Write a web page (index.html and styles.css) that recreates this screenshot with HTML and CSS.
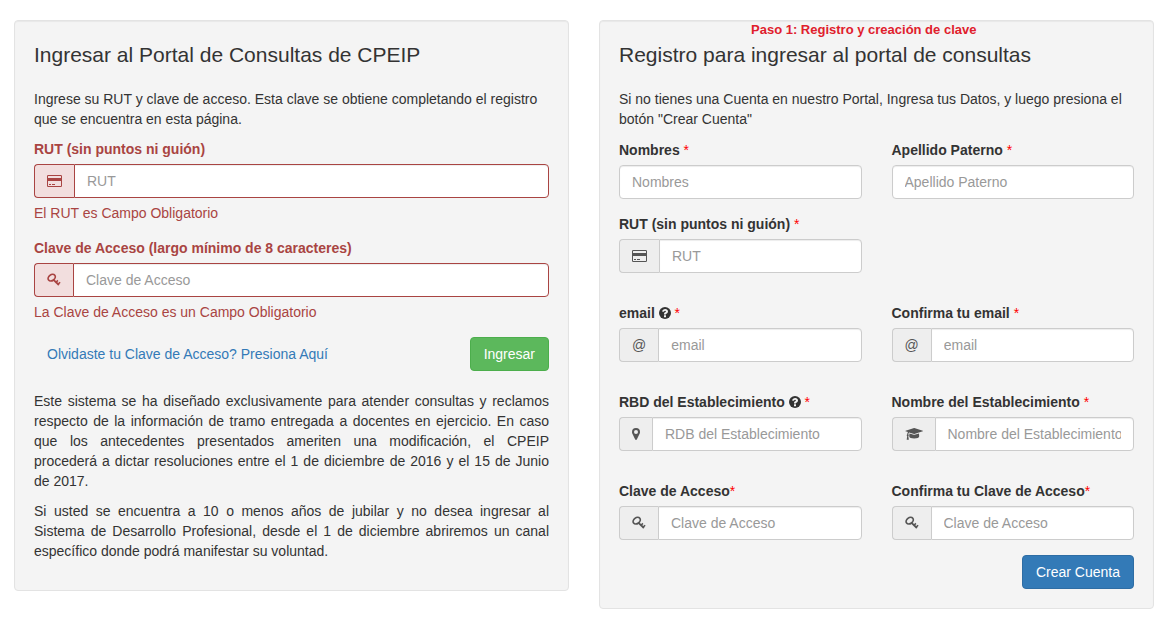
FILE: index.html
```html
<!DOCTYPE html>
<html lang="es">
<head>
<meta charset="utf-8">
<title>Portal de Consultas de CPEIP</title>
<link rel="stylesheet" href="styles.css">
</head>
<body>
<svg class="sprite" aria-hidden="true">
  <symbol id="card" viewBox="0 0 15 14"><path fill-rule="evenodd" d="M1.3 1h12.4A1.3 1.3 0 0 1 15 2.300v9.400a1.300 1.300 0 0 1-1.300 1.300H1.300A1.300 1.300 0 0 1 0 11.700V2.300A1.300 1.300 0 0 1 1.300 1zM1.300 2a.3.3 0 0 0-.3.3V4h13V2.300a.3.3 0 0 0-.3-.3zM1 7v4.700c0 .2.100.3.300.3h12.400c.2 0 .3-.1.300-.3V7zM2 10h2v1H2zM5 10h3v1H5z"/></symbol>
  <symbol id="key" viewBox="0 0 14 14"><g fill="none" stroke="currentColor"><ellipse cx="4.700" cy="4.700" rx="3.900" ry="2.900" transform="rotate(-38 4.700 4.700)" stroke-width="1.700"/><path stroke-width="1.800" d="M6.300 6.600l5.600 5.400"/><path stroke-width="1.600" d="M9 9.300l1.900-1.900M11 11.300l2.100-2.100"/></g></symbol>
  <symbol id="pin" viewBox="0 0 8 14"><path fill-rule="evenodd" d="M4 1a4 4 0 0 1 4 4c0 .7-.1 1.200-.4 1.700l-2.800 5.800a.9.9 0 0 1-1.600 0L.4 6.700C.1 6.200 0 5.700 0 5a4 4 0 0 1 4-4zm0 2a2 2 0 1 0 0 4 2 2 0 0 0 0-4z"/></symbol>
  <symbol id="cap" viewBox="0 0 18 14"><path d="M14 6.400l.2 2.800C14.300 10.500 12 11.500 9.200 11.500S4.100 10.500 4.200 9.200l.2-2.800 4.500 1.400h.6zM18 4c0 .1-.1.200-.2.300L9.300 7h-.2L4.100 5.400c-.4.300-.7 1-.8 2 .3.200.5.500.5.900 0 .3-.2.600-.5.800l.5 3.400c0 .2-.1.300-.3.300H2c-.2 0-.3-.1-.3-.3l.5-3.400c-.3-.2-.5-.5-.5-.8 0-.4.200-.7.5-.9.100-.8.300-1.700.8-2.300L.600 4.300C.500 4.200.4 4.100.4 4s.1-.2.200-.3L9.100 1h.2l8.500 2.700c.1.100.2.200.2.300z"/></symbol>
  <symbol id="help" viewBox="0 0 12 14"><circle cx="6" cy="7" r="6"/><path class="mark" d="M5 9.300h2v2H5zM3 5.400C3.500 3.900 4.500 3 6.200 3 7.900 3 9 4 9 5.400c0 1.200-.7 1.700-1.300 2-.5.300-.7.500-.7.900v.2H5v-.4c0-1 .5-1.500 1.100-1.900.5-.3.800-.4.800-.8s-.3-.7-.8-.7-.9.300-1.300 1z"/></symbol>
</svg>
<main class="page">
  <section class="well">
    <h1 class="title">Ingresar al Portal de Consultas de CPEIP</h1>
    <p>Ingrese su RUT y clave de acceso. Esta clave se obtiene completando el registro que se encuentra en esta página.</p>
    <form>
      <div class="field error">
        <label for="l-rut">RUT (sin puntos ni guión)</label>
        <div class="group"><span class="addon"><svg class="icon card"><use href="#card"/></svg></span><input id="l-rut" type="text" placeholder="RUT"></div>
        <span class="note">El RUT es Campo Obligatorio</span>
      </div>
      <div class="field error">
        <label for="l-clave">Clave de Acceso (largo mínimo de 8 caracteres)</label>
        <div class="group"><span class="addon"><svg class="icon"><use href="#key"/></svg></span><input id="l-clave" type="password" placeholder="Clave de Acceso"></div>
        <span class="note">La Clave de Acceso es un Campo Obligatorio</span>
      </div>
      <div class="actions">
        <a class="link" href="#">Olvidaste tu Clave de Acceso? Presiona Aquí</a>
        <button class="btn success" type="button">Ingresar</button>
      </div>
    </form>
    <p class="justify">Este sistema se ha diseñado exclusivamente para atender consultas y reclamos respecto de la información de tramo entregada a docentes en ejercicio. En caso que los antecedentes presentados ameriten una modificación, el CPEIP procederá&nbsp;a&nbsp;dictar resoluciones entre el 1 de diciembre de 2016 y el 15 de Junio de&nbsp;2017.</p>
    <p class="justify">Si usted se encuentra a 10 o menos años de jubilar y no desea ingresar al Sistema de Desarrollo Profesional, desde el 1 de diciembre abriremos un canal específico donde podrá manifestar su voluntad.</p>
  </section>

  <section class="well">
    <div class="step">Paso 1: Registro y creación de clave</div>
    <h2 class="title">Registro para ingresar al portal de consultas</h2>
    <p>Si no tienes una Cuenta en nuestro Portal, Ingresa tus Datos, y luego presiona el botón "Crear Cuenta"</p>
    <form class="register">
      <div class="row tight">
        <div class="field"><label for="nombres">Nombres <span class="req">*</span></label><div class="group"><input id="nombres" type="text" placeholder="Nombres"></div></div>
        <div class="field"><label for="apellido">Apellido Paterno <span class="req">*</span></label><div class="group"><input id="apellido" type="text" placeholder="Apellido Paterno"></div></div>
      </div>
      <div class="row">
        <div class="field"><label for="rut">RUT (sin puntos ni guión) <span class="req">*</span></label><div class="group"><span class="addon"><svg class="icon card"><use href="#card"/></svg></span><input id="rut" type="text" placeholder="RUT"></div></div>
      </div>
      <div class="row">
        <div class="field"><label for="email">email <svg class="icon help"><use href="#help"/></svg> <span class="req">*</span></label><div class="group"><span class="addon">@</span><input id="email" type="email" placeholder="email"></div></div>
        <div class="field"><label for="email2">Confirma tu email <span class="req">*</span></label><div class="group"><span class="addon">@</span><input id="email2" type="email" placeholder="email"></div></div>
      </div>
      <div class="row">
        <div class="field"><label for="rbd">RBD del Establecimiento <svg class="icon help"><use href="#help"/></svg> <span class="req">*</span></label><div class="group"><span class="addon"><svg class="icon pin"><use href="#pin"/></svg></span><input id="rbd" type="text" placeholder="RDB del Establecimiento"></div></div>
        <div class="field"><label for="estab">Nombre del Establecimiento <span class="req">*</span></label><div class="group"><span class="addon"><svg class="icon cap"><use href="#cap"/></svg></span><input id="estab" type="text" placeholder="Nombre del Establecimiento"></div></div>
      </div>
      <div class="row tight">
        <div class="field"><label for="clave">Clave de Acceso<span class="req">*</span></label><div class="group"><span class="addon"><svg class="icon"><use href="#key"/></svg></span><input id="clave" type="password" placeholder="Clave de Acceso"></div></div>
        <div class="field"><label for="clave2">Confirma tu Clave de Acceso<span class="req">*</span></label><div class="group"><span class="addon"><svg class="icon"><use href="#key"/></svg></span><input id="clave2" type="password" placeholder="Clave de Acceso"></div></div>
      </div>
      <div class="actions end"><button class="btn primary" type="button">Crear Cuenta</button></div>
    </form>
  </section>
</main>
</body>
</html>
```
FILE: styles.css
```css
* { box-sizing: border-box; }
body {
  margin: 0;
  background: #fff;
  color: #333;
  font: 14px/20px "Liberation Sans", Arial, sans-serif;
}
.sprite { display: none; }
.page {
  display: grid;
  grid-template-columns: 1fr 1fr;
  align-items: start;
  gap: 30px;
  padding: 20px 16px 13px 14px;
}
.well {
  position: relative;
  min-width: 0;
  padding: 19px;
  background: #f4f4f4;
  border: 1px solid #e3e3e3;
  border-radius: 4px;
  box-shadow: inset 0 1px 1px rgba(0, 0, 0, .05);
}
.title {
  margin: 3px 0 22px;
  font-size: 21px;
  line-height: 24px;
  font-weight: 400;
}
p { margin: 0 0 10px; }
.justify { text-align: justify; }
.step {
  position: absolute;
  top: 0;
  left: 151px;
  color: #e0202c;
  font: bold 13px/18px "Liberation Sans Narrow", "Arial Narrow", "Liberation Sans", sans-serif;
  white-space: nowrap;
}
.field { min-width: 0; }
label { display: block; margin-bottom: 5px; font-weight: 700; }
.req { color: #f00; font-weight: 400; }
.group { display: flex; height: 34px; }
.addon {
  display: flex;
  align-items: center;
  padding: 0 12px;
  background: #eee;
  color: #555;
  border: 1px solid #ccc;
  border-right: 0;
  border-radius: 4px 0 0 4px;
}
input {
  flex: 1;
  min-width: 0;
  padding: 0 12px;
  background: #fff;
  color: #555;
  border: 1px solid #ccc;
  border-radius: 4px;
  box-shadow: inset 0 1px 1px rgba(0, 0, 0, .075);
  font: inherit;
}
input::placeholder { color: #999; opacity: 1; }
.addon + input { border-radius: 0 4px 4px 0; }
.icon { display: block; width: 14px; height: 14px; fill: currentColor; }
.card { width: 15px; }
.pin { width: 8px; }
.cap { width: 18px; }
.help { display: inline-block; width: 12px; vertical-align: -2px; }
.mark { fill: #f4f4f4; }
.error { margin-bottom: 15px; color: #a94442; }
.error .addon { background: #f2dede; color: #a94442; border-color: #a94442; }
.error input { border-color: #a94442; }
.note { display: block; margin-top: 5px; }
.actions {
  display: flex;
  justify-content: space-between;
  align-items: center;
  margin-bottom: 20px;
}
.link { padding-left: 13px; color: #337ab7; text-decoration: none; }
.btn {
  height: 34px;
  padding: 0 13px;
  border: 1px solid;
  border-radius: 4px;
  color: #fff;
  font: inherit;
}
.success { background: #5cb85c; border-color: #4cae4c; }
.primary { background: #337ab7; border-color: #2e6da4; }
.register { padding-top: 1px; }
.row {
  display: grid;
  grid-template-columns: 1fr 1fr;
  gap: 30px;
  margin-bottom: 30px;
}
.tight { margin-bottom: 15px; }
.end { justify-content: flex-end; margin-bottom: 0; }
```
